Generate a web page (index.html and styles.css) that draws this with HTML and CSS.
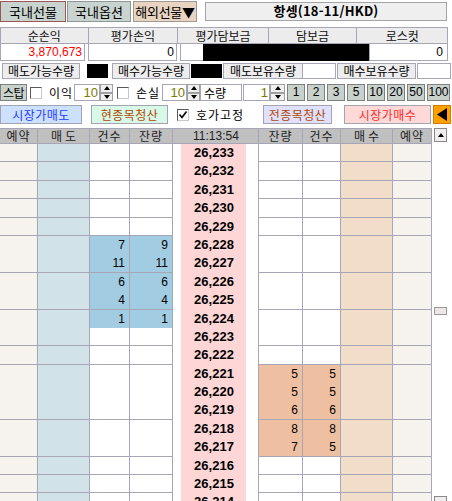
FILE: index.html
```html
<!DOCTYPE html>
<html lang="ko">
<head>
<meta charset="utf-8">
<title>항셍 호가</title>
<link rel="stylesheet" href="styles.css">
</head>
<body>
<div class="app">
  <div class="tabs">
    <button class="tab tab-sel">국내선물</button>
    <button class="tab tab-opt">국내옵션</button>
    <button class="tab tab-ovs">해외선물▼</button>
    <div class="title">항셍(18-11/HKD)</div>
  </div>

  <div class="sum-head">
    <div class="sh w88">순손익</div>
    <div class="sh w90">평가손익</div>
    <div class="sh w91">평가담보금</div>
    <div class="sh w89">담보금</div>
    <div class="sh w90 last">로스컷</div>
  </div>
  <div class="sum-vals">
    <div class="sv v1 red">3,870,673</div>
    <div class="sv v2">0</div>
    <div class="sv v3"></div>
    <div class="redact"></div>
    <div class="sv v5">0</div>
  </div>

  <div class="qty-row">
    <div class="lbl l1">매도가능수량</div>
    <div class="blk b1"></div>
    <div class="lbl l2">매수가능수량</div>
    <div class="blk b2"></div>
    <div class="lbl l3">매도보유수량</div>
    <div class="box x3"></div>
    <div class="lbl l4">매수보유수량</div>
    <div class="box x4"></div>
  </div>

  <div class="stop-row">
    <button class="gbtn stop">스탑</button>
    <span class="chk c1"></span>
    <span class="txt t1">이익</span>
    <span class="num n1">10</span>
    <span class="spin"><span class="up"></span><span class="dn"></span></span>
    <span class="chk c2"></span>
    <span class="txt t2">손실</span>
    <span class="num n2">10</span>
    <span class="spin"><span class="up"></span><span class="dn"></span></span>
    <span class="qlbl">수량</span>
    <span class="num n3">1</span>
    <span class="spin s3"><span class="up"></span><span class="dn"></span></span>
    <button class="gbtn qb">1</button>
    <button class="gbtn qb">2</button>
    <button class="gbtn qb">3</button>
    <button class="gbtn qb">5</button>
    <button class="gbtn qb">10</button>
    <button class="gbtn qb">20</button>
    <button class="gbtn qb">50</button>
    <button class="gbtn qb q100">100</button>
  </div>

  <div class="act-row">
    <button class="abtn mkt-sell">시장가매도</button>
    <button class="abtn clr-one">현종목청산</button>
    <span class="chk checked c3"><svg width="10" height="10" viewBox="0 0 10 10"><polyline points="1.5,4.5 4,7.5 8.5,1.5" fill="none" stroke="#000" stroke-width="1.6"/></svg></span>
    <span class="txt t3">호가고정</span>
    <button class="abtn clr-all">전종목청산</button>
    <button class="abtn mkt-buy">시장가매수</button>
    <button class="arrow"><svg width="10" height="13" viewBox="0 0 10 13"><polygon points="10,0 10,13 0,6.5" fill="#000"/></svg></button>
  </div>

  <div class="ob">
    <div class="ob-grid">
      <div class="ob-head">
        <span class="h">예약</span>
        <span class="h sp">매도</span>
        <span class="h">건수</span>
        <span class="h">잔량</span>
        <span class="h time">11:13:54</span>
        <span class="h">잔량</span>
        <span class="h">건수</span>
        <span class="h sp">매수</span>
        <span class="h">예약</span>
      </div>

      <div class="row"><span class="c rs"></span><span class="c sell"></span><span class="c"></span><span class="c"></span><span class="gap"></span><span class="price">26,233</span><span class="gap2"></span><span class="c"></span><span class="c"></span><span class="c buy"></span><span class="c rs"></span></div>
      <div class="row"><span class="c rs"></span><span class="c sell"></span><span class="c"></span><span class="c"></span><span class="gap"></span><span class="price">26,232</span><span class="gap2"></span><span class="c"></span><span class="c"></span><span class="c buy"></span><span class="c rs"></span></div>
      <div class="row"><span class="c rs"></span><span class="c sell"></span><span class="c"></span><span class="c"></span><span class="gap"></span><span class="price">26,231</span><span class="gap2"></span><span class="c"></span><span class="c"></span><span class="c buy"></span><span class="c rs"></span></div>
      <div class="row"><span class="c rs"></span><span class="c sell"></span><span class="c"></span><span class="c"></span><span class="gap"></span><span class="price">26,230</span><span class="gap2"></span><span class="c"></span><span class="c"></span><span class="c buy"></span><span class="c rs"></span></div>
      <div class="row"><span class="c rs"></span><span class="c sell"></span><span class="c"></span><span class="c"></span><span class="gap"></span><span class="price">26,229</span><span class="gap2"></span><span class="c"></span><span class="c"></span><span class="c buy"></span><span class="c rs"></span></div>
      <div class="row"><span class="c rs"></span><span class="c sell"></span><span class="c ask">7</span><span class="c ask">9</span><span class="gap"></span><span class="price">26,228</span><span class="gap2"></span><span class="c"></span><span class="c"></span><span class="c buy"></span><span class="c rs"></span></div>
      <div class="row"><span class="c rs"></span><span class="c sell"></span><span class="c ask">11</span><span class="c ask">11</span><span class="gap"></span><span class="price">26,227</span><span class="gap2"></span><span class="c"></span><span class="c"></span><span class="c buy"></span><span class="c rs"></span></div>
      <div class="row"><span class="c rs"></span><span class="c sell"></span><span class="c ask">6</span><span class="c ask">6</span><span class="gap"></span><span class="price">26,226</span><span class="gap2"></span><span class="c"></span><span class="c"></span><span class="c buy"></span><span class="c rs"></span></div>
      <div class="row"><span class="c rs"></span><span class="c sell"></span><span class="c ask">4</span><span class="c ask">4</span><span class="gap"></span><span class="price">26,225</span><span class="gap2"></span><span class="c"></span><span class="c"></span><span class="c buy"></span><span class="c rs"></span></div>
      <div class="row split"><span class="c rs"></span><span class="c sell"></span><span class="c ask">1</span><span class="c ask">1</span><span class="gap"></span><span class="price">26,224</span><span class="gap2"></span><span class="c"></span><span class="c"></span><span class="c buy"></span><span class="c rs"></span></div>
      <div class="row"><span class="c rs"></span><span class="c sell"></span><span class="c"></span><span class="c"></span><span class="gap"></span><span class="price">26,223</span><span class="gap2"></span><span class="c"></span><span class="c"></span><span class="c buy"></span><span class="c rs"></span></div>
      <div class="row"><span class="c rs"></span><span class="c sell"></span><span class="c"></span><span class="c"></span><span class="gap"></span><span class="price">26,222</span><span class="gap2"></span><span class="c"></span><span class="c"></span><span class="c buy"></span><span class="c rs"></span></div>
      <div class="row"><span class="c rs"></span><span class="c sell"></span><span class="c"></span><span class="c"></span><span class="gap"></span><span class="price">26,221</span><span class="gap2"></span><span class="c bid">5</span><span class="c bid">5</span><span class="c buy"></span><span class="c rs"></span></div>
      <div class="row"><span class="c rs"></span><span class="c sell"></span><span class="c"></span><span class="c"></span><span class="gap"></span><span class="price">26,220</span><span class="gap2"></span><span class="c bid">5</span><span class="c bid">5</span><span class="c buy"></span><span class="c rs"></span></div>
      <div class="row"><span class="c rs"></span><span class="c sell"></span><span class="c"></span><span class="c"></span><span class="gap"></span><span class="price">26,219</span><span class="gap2"></span><span class="c bid">6</span><span class="c bid">6</span><span class="c buy"></span><span class="c rs"></span></div>
      <div class="row"><span class="c rs"></span><span class="c sell"></span><span class="c"></span><span class="c"></span><span class="gap"></span><span class="price">26,218</span><span class="gap2"></span><span class="c bid">8</span><span class="c bid">8</span><span class="c buy"></span><span class="c rs"></span></div>
      <div class="row"><span class="c rs"></span><span class="c sell"></span><span class="c"></span><span class="c"></span><span class="gap"></span><span class="price">26,217</span><span class="gap2"></span><span class="c bid">7</span><span class="c bid">5</span><span class="c buy"></span><span class="c rs"></span></div>
      <div class="row"><span class="c rs"></span><span class="c sell"></span><span class="c"></span><span class="c"></span><span class="gap"></span><span class="price">26,216</span><span class="gap2"></span><span class="c"></span><span class="c"></span><span class="c buy"></span><span class="c rs"></span></div>
      <div class="row"><span class="c rs"></span><span class="c sell"></span><span class="c"></span><span class="c"></span><span class="gap"></span><span class="price">26,215</span><span class="gap2"></span><span class="c"></span><span class="c"></span><span class="c buy"></span><span class="c rs"></span></div>
      <div class="row"><span class="c rs"></span><span class="c sell"></span><span class="c"></span><span class="c"></span><span class="gap"></span><span class="price">26,214</span><span class="gap2"></span><span class="c"></span><span class="c"></span><span class="c buy"></span><span class="c rs"></span></div>
    </div>
    <div class="sb">
      <span class="sb-btn"><span class="tri-up"></span></span>
      <span class="sb-thumb"></span>
      <span class="sb-btn sb-bottom"></span>
    </div>
  </div>
</div>
</body>
</html>
```

FILE: styles.css
```css
* { box-sizing: border-box; margin: 0; padding: 0; }

html, body { background: #ffffff; }

body {
  margin: 0;
  width: 452px;
  height: 501px;
  overflow: hidden;
  font-family: "Noto Sans CJK KR", "Liberation Sans", sans-serif;
  font-size: 12px;
  color: #000;
}

button {
  font-family: "Noto Sans CJK KR", "Liberation Sans", sans-serif;
  color: #000;
  cursor: default;
}

/* ---------- tabs ---------- */
.tabs {
  display: flex;
  align-items: flex-start;
  height: 27px;
  padding-top: 1px;
}
.tab {
  height: 21px;
  font-size: 13px;
  line-height: 18px;
  background: #c9d3cf;
  border: 1px solid #8c9894;
}
.tab-sel { width: 66px; border-color: #9c5656; }
.tab-opt { width: 64px; margin-left: 1px; }
.tab-ovs { width: 64px; margin-left: 2px; background: #e8d4c0; border-color: #a09a94; letter-spacing: -0.3px; }
.title {
  width: 242px;
  height: 19px;
  margin-left: 8px;
  margin-top: 1px;
  background: #efefef;
  border: 1px solid #a4a4a4;
  text-align: center;
  font-weight: bold;
  font-size: 13px;
  line-height: 16px;
  letter-spacing: 0.2px;
}

/* ---------- summary ---------- */
.sum-head {
  display: flex;
  width: 448px;
  height: 17px;
  background: #ececec;
  border: 1px solid #a6a6b6;
}
.sh {
  text-align: center;
  font-size: 12px;
  line-height: 15px;
  border-right: 1px solid #a6a6b6;
  color: #111;
}
.sh.last { border-right: none; }
.w88 { width: 88px; }
.w89 { width: 89px; }
.w90 { width: 90px; }
.w91 { width: 91px; }

.sum-vals {
  display: flex;
  height: 17px;
  margin-top: 0;
}
.sv {
  height: 17px;
  background: #fff;
  border: 1px solid #a6a6b6;
  border-top: none;
  text-align: right;
  font-family: "Liberation Sans", sans-serif;
  font-size: 12px;
  line-height: 16px;
  padding-right: 2px;
}
.v1 { width: 85px; }
.v2 { width: 89px; margin-left: 3px; }
.v3 { width: 23px; margin-left: 3px; border-right: none; }
.v5 { width: 79px; padding-right: 4px; }
.red { color: #ff0000; }
.redact { width: 166px; height: 17px; background: #000; }

/* ---------- qty row ---------- */
.qty-row {
  display: flex;
  align-items: center;
  height: 16px;
  margin-top: 2px;
}
.lbl {
  height: 16px;
  background: #ededed;
  border: 1px solid #a6a6b6;
  text-align: center;
  font-size: 12px;
  line-height: 14px;
}
.l1 { width: 78px; margin-left: 2px; }
.l2 { width: 78px; margin-left: 4px; }
.l3 { width: 80px; margin-left: 1px; }
.l4 { width: 79px; margin-left: 1px; }
.blk { height: 14px; background: #000; }
.b1 { width: 21px; margin-left: 7px; }
.b2 { width: 31px; margin-left: 1px; }
.box { height: 16px; background: #fff; border: 1px solid #a6a6b6; }
.x3 { width: 33px; border-left: none; }
.x4 { width: 34px; margin-left: 1px; }

/* ---------- stop row ---------- */
.stop-row {
  display: flex;
  align-items: center;
  height: 17px;
  margin-top: 5px;
}
.gbtn {
  height: 17px;
  background: #c9d1cd;
  border: 1px solid #7c807e;
  font-family: "Liberation Sans", sans-serif;
  font-size: 12px;
  line-height: 15px;
  text-align: center;
}
.stop {
  width: 27px;
  font-family: "Noto Sans CJK KR", sans-serif;
  font-size: 12px;
  letter-spacing: -0.5px;
}
.qb { width: 18px; margin-left: 2px; padding: 0; }
.qb:first-of-type { margin-left: 2px; }
.q100 { width: 23px; }

.chk {
  width: 12px;
  height: 12px;
  background: #fff;
  border: 1px solid;
  border-color: #5a5a5a #c8c8c8 #c8c8c8 #5a5a5a;
  display: flex;
  align-items: center;
  justify-content: center;
  flex: none;
}
.c1 { margin-left: 3px; }
.c2 { margin-left: 4px; }
.txt { font-size: 12px; line-height: 16px; }
.t1 { width: 32px; padding-left: 7px; letter-spacing: 1px; }
.t2 { width: 33px; padding-left: 7px; letter-spacing: 1px; }

.num {
  height: 17px;
  background: #fff;
  border: 1px solid #a6a6b6;
  text-align: right;
  color: #7c7a00;
  font-family: "Liberation Sans", sans-serif;
  font-size: 13px;
  line-height: 15px;
  padding-right: 1px;
}
.n1 { width: 26px; }
.n2 { width: 25px; }
.n3 { width: 27px; margin-left: 1px; }

.spin {
  width: 13px;
  height: 17px;
  display: flex;
  flex-direction: column;
}
.spin.s3 { width: 15px; }
.spin > span {
  flex: 1;
  background: #f0f0f0;
  border: 1px solid #a0a0a0;
  display: flex;
  align-items: center;
  justify-content: center;
}
.spin .up::before {
  content: "";
  border-left: 3px solid transparent;
  border-right: 3px solid transparent;
  border-bottom: 4px solid #000;
}
.spin .dn::before {
  content: "";
  border-left: 3px solid transparent;
  border-right: 3px solid transparent;
  border-top: 4px solid #000;
}
.qlbl {
  width: 42px;
  height: 17px;
  background: #fff;
  border: 1px solid #a6a6b6;
  font-size: 12px;
  line-height: 15px;
  padding-left: 3px;
}

/* ---------- action row ---------- */
.act-row {
  display: flex;
  align-items: center;
  height: 19px;
  margin-top: 4px;
}
.abtn {
  height: 19px;
  font-size: 12px;
  line-height: 17px;
  border: 1px solid #a4a4b0;
  letter-spacing: 0.5px;
}
.mkt-sell { width: 82px; background: #cce0ff; color: #1e3cff; }
.clr-one { width: 77px; margin-left: 9px; background: #d8f8e8; color: #b04a00; }
.c3 { margin-left: 9px; }
.t3 { width: 74px; padding-left: 7px; letter-spacing: 1px; }
.clr-all { width: 69px; background: #e0e0ff; color: #b04a00; }
.mkt-buy { width: 87px; margin-left: 12px; background: #ffd8d8; color: #ff2a2a; }
.arrow {
  width: 18px;
  height: 19px;
  margin-left: 2px;
  background: #ffa000;
  border: 1px solid #d08000;
  display: flex;
  align-items: center;
  justify-content: center;
}

/* ---------- order book ---------- */
.ob {
  display: flex;
  margin-top: 4px;
}
.ob-grid {
  width: 432px;
  border-top: 1px solid #a6a6b6;
}
.ob-head {
  display: grid;
  grid-template-columns: 38px 52px 40px 43px 86px 44px 38px 52px 39px;
  height: 15px;
  background: #c0c0c0;
  border-bottom: 1px solid #a6a6b6;
}
.h {
  border-right: 1px solid #a6a6b6;
  text-align: center;
  font-size: 12px;
  line-height: 14px;
  color: #222;
  letter-spacing: 1px;
}
.h.sp { letter-spacing: 3px; padding-left: 3px; }
.h.time {
  font-family: "Liberation Sans", sans-serif;
  letter-spacing: 0;
  padding-left: 1px;
}

.row {
  display: grid;
  grid-template-columns: 38px 52px 40px 43px 8px 65px 13px 44px 38px 52px 39px;
  height: 18.4px;
}
.c {
  border-right: 1px solid #a6a6b6;
  border-bottom: 1px solid #a6a6b6;
  background: #fff;
  text-align: right;
  padding-right: 4px;
  font-family: "Liberation Sans", sans-serif;
  font-size: 12px;
  line-height: 18px;
}
.c.rs { background: #f6f3ef; }
.c.sell { background: #d2e2e9; }
.c.buy { background: #f1ddca; }
.c.ask { background: #a2cce2; }
.c.bid { background: #efbfa2; }
.gap { background: #fff; }
.gap2 { background: #fff; border-right: 1px solid #a6a6b6; }
.price {
  background: #ffd6d6;
  text-align: center;
  font-family: "Liberation Sans", sans-serif;
  font-weight: bold;
  font-size: 13px;
  line-height: 18px;
  padding-left: 1px;
}
.row.split > span { border-bottom: 1px solid #000; }

/* ---------- scrollbar ---------- */
.sb {
  width: 20px;
  background: #fff;
  display: flex;
  flex-direction: column;
  align-items: flex-start;
  padding-left: 2px;
}
.sb-btn {
  width: 13px;
  height: 14px;
  background: #f0eeee;
  border: 1px solid #8a8a8a;
  display: flex;
  align-items: center;
  justify-content: center;
  flex: none;
}
.tri-up {
  border-left: 3px solid transparent;
  border-right: 3px solid transparent;
  border-bottom: 4px solid #000;
}
.sb-thumb {
  width: 13px;
  height: 8px;
  margin-top: 165px;
  background: #ece6e6;
  border: 1px solid #9a9a9a;
  flex: none;
}
.sb-bottom { margin-top: 181px; }
```
